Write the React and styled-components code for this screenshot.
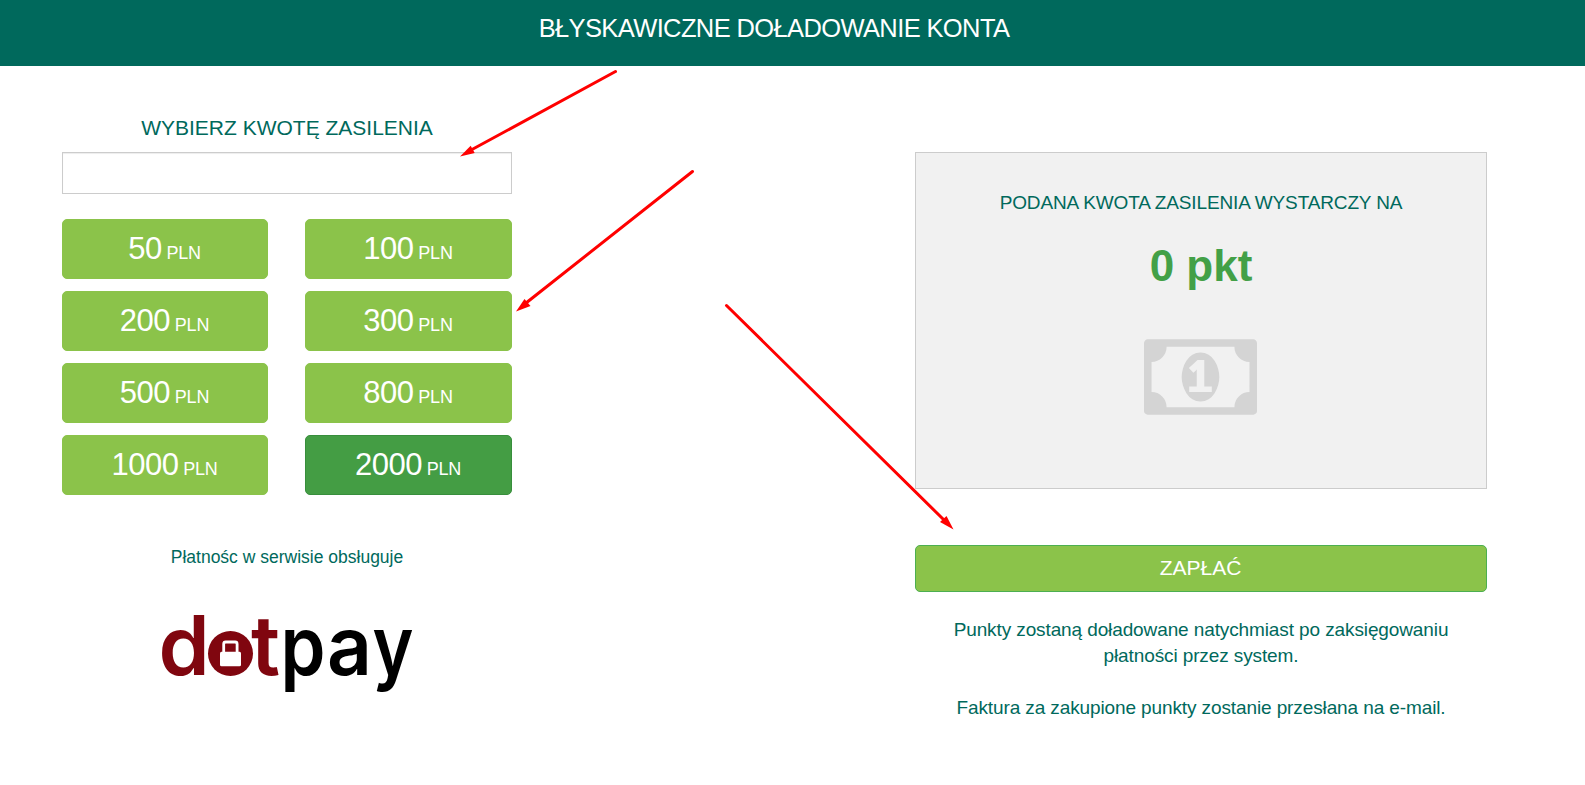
import React, { useState } from 'react';
import styled, { createGlobalStyle } from 'styled-components';

const GlobalStyle = createGlobalStyle`
  * {
    box-sizing: border-box;
  }
  body {
    margin: 0;
    background: #fff;
    color: #00695c;
    font-family: "Liberation Sans", Arial, sans-serif;
  }
`;

const Page = styled.div`
  position: relative;
  height: 785px;
  overflow: hidden;
`;

const TopBar = styled.header`
  height: 66px;
  padding-right: 37px;
  background: #00695c;
`;

const Title = styled.h1`
  margin: 0;
  color: #fff;
  font-size: 25.5px;
  font-weight: normal;
  letter-spacing: -0.62px;
  line-height: 56px;
  text-align: center;
`;

const Columns = styled.main`
  display: flex;
  justify-content: space-between;
  padding: 46px 98px 0 62px;
`;

const AmountColumn = styled.section`
  width: 450px;
  text-align: center;
`;

const SummaryColumn = styled.section`
  width: 572px;
  padding-top: 40px;
  text-align: center;
`;

const Label = styled.label`
  display: block;
  height: 40px;
  font-size: 21px;
  line-height: 32px;
`;

const AmountInput = styled.input`
  display: block;
  width: 100%;
  height: 42px;
  padding: 6px 12px;
  border: 1px solid #ccc;
  border-radius: 0;
  box-shadow: inset 0 1px 1px rgba(0, 0, 0, 0.075);
  font-size: 18px;
  outline: none;
`;

const AmountGrid = styled.div`
  display: grid;
  grid-template-columns: 206px 207px;
  gap: 12px 37px;
  margin-top: 25px;
`;

const AmountButton = styled.button`
  height: 60px;
  padding: 2px 1px 0 0;
  border: 1px solid ${props => (props.$active ? '#388e3c' : '#8bc34a')};
  border-radius: 5px;
  background: ${props => (props.$active ? '#449d44' : '#8bc34a')};
  color: #fff;
  font-family: inherit;
  font-size: 31px;
  letter-spacing: -0.5px;
  line-height: 54px;
  cursor: pointer;
`;

const Currency = styled.span`
  font-size: 18px;
  letter-spacing: -0.2px;
`;

const Provider = styled.p`
  margin: 50px 0 0;
  font-size: 17.5px;
  line-height: 24px;
`;

const Logo = styled.svg`
  display: block;
  margin: 11px 0 0 88px;
`;

const Summary = styled.div`
  height: 337px;
  padding-top: 36px;
  border: 1px solid #ccc;
  background: #f1f1f1;
`;

const SummaryText = styled.p`
  margin: 0;
  font-size: 19px;
  letter-spacing: -0.14px;
  line-height: 28px;
`;

const Points = styled.p`
  margin: 22px 0 0;
  color: #43a047;
  font-size: 44px;
  font-weight: bold;
  line-height: 54px;
`;

const MoneyIcon = styled.svg`
  display: block;
  margin: 46px 0 0 228px;
  fill: #d4d4d4;
`;

const PayButton = styled.button`
  display: block;
  width: 100%;
  height: 47px;
  margin-top: 56px;
  padding: 0 1px 2px 0;
  border: 1px solid #4caf50;
  border-radius: 5px;
  background: #8bc34a;
  color: #fff;
  font-family: inherit;
  font-size: 21px;
  cursor: pointer;
`;

const Note = styled.p`
  margin: 25px 0 26px;
  font-size: 19px;
  letter-spacing: -0.11px;
  line-height: 26px;
`;

const Arrows = styled.svg`
  position: absolute;
  top: 0;
  left: 0;
  pointer-events: none;
`;

const amounts = [50, 100, 200, 300, 500, 800, 1000, 2000];

const DotpayLogo = () => (
  <Logo width="280" height="130" viewBox="0 -20 280 130" fontFamily="Inter, sans-serif" fontSize="82" fontWeight="600">
    <text x="8.5" y="75" fill="#80060f">d</text>
    <circle cx="80.5" cy="53.5" r="22.5" fill="#80060f" />
    <rect x="73.7" y="42" width="13.4" height="14" rx="2" fill="none" stroke="#fff" strokeWidth="2.8" />
    <rect x="70" y="51.8" width="21" height="14.5" rx="1.5" fill="#fff" />
    <text x="101" y="75" textLength="29" lengthAdjust="spacingAndGlyphs" fill="#80060f">t</text>
    <text x="130.5" y="75" textLength="45" lengthAdjust="spacingAndGlyphs">p</text>
    <text x="177" y="75" textLength="45" lengthAdjust="spacingAndGlyphs">a</text>
    <text x="222.5" y="75" textLength="41" lengthAdjust="spacingAndGlyphs">y</text>
  </Logo>
);

const App = () => {
  const [amount, setAmount] = useState('');

  return (
    <Page>
      <GlobalStyle />
      <TopBar>
        <Title>BŁYSKAWICZNE DOŁADOWANIE KONTA</Title>
      </TopBar>

      <Columns>
        <AmountColumn>
          <Label htmlFor="amount">WYBIERZ KWOTĘ ZASILENIA</Label>
          <AmountInput id="amount" value={amount} onChange={(e) => setAmount(e.target.value)} />
          <AmountGrid>
            {amounts.map(value => (
              <AmountButton key={value} $active={value === 2000} onClick={() => setAmount(String(value))}>
                {value}<Currency> PLN</Currency>
              </AmountButton>
            ))}
          </AmountGrid>
          <Provider>Płatnośc w serwisie obsługuje</Provider>
          <DotpayLogo />
        </AmountColumn>

        <SummaryColumn>
          <Summary>
            <SummaryText>PODANA KWOTA ZASILENIA WYSTARCZY NA</SummaryText>
            <Points>{Number(amount) || 0} pkt</Points>
            <MoneyIcon width="113" height="76" viewBox="0 0 1920 1280">
              <path
                fillRule="evenodd"
                transform="translate(0 1280) scale(1 -1)"
                d="M768 384h384v96h-128v448h-114l-148-137 77-80q42 37 55 57h2v-288h-128v-96z M1280 640q0-70-21-142t-59.5-134-101.5-101-138-39-138 39-101.5 101-59.5 134-21 142 21 142 59.5 134 101.5 101 138 39 138-39 101.5-101 59.5-134 21-142z M1792 384v512q-106 0-181 75t-75 181h-1152q0-106-75-181t-181-75v-512q106 0 181-75t75-181h1152q0 106 75 181t181 75z M1920 1216v-1152q0-26-19-45t-45-19h-1792q-26 0-45 19t-19 45v1152q0 26 19 45t45 19h1792q26 0 45-19t19-45z"
              />
            </MoneyIcon>
          </Summary>
          <PayButton>ZAPŁAĆ</PayButton>
          <Note>
            Punkty zostaną doładowane natychmiast po zaksięgowaniu
            <br />
            płatności przez system.
          </Note>
          <Note>Faktura za zakupione punkty zostanie przesłana na e-mail.</Note>
        </SummaryColumn>
      </Columns>

      <Arrows width="1585" height="785" fill="#f00" stroke="#f00" strokeWidth="3" strokeLinecap="round">
        <path d="M615.5 71.5L472 149.5" />
        <path d="M460 156.5L470.7 145.7L474.7 153Z" stroke="none" />
        <path d="M692.5 171.5L526 303" />
        <path d="M516 311.5L524.5 299L530.5 306Z" stroke="none" />
        <path d="M726.5 305.5L943 519" />
        <path d="M953.5 529.5L946.5 516L940 522Z" stroke="none" />
      </Arrows>
    </Page>
  );
};

export default App;
